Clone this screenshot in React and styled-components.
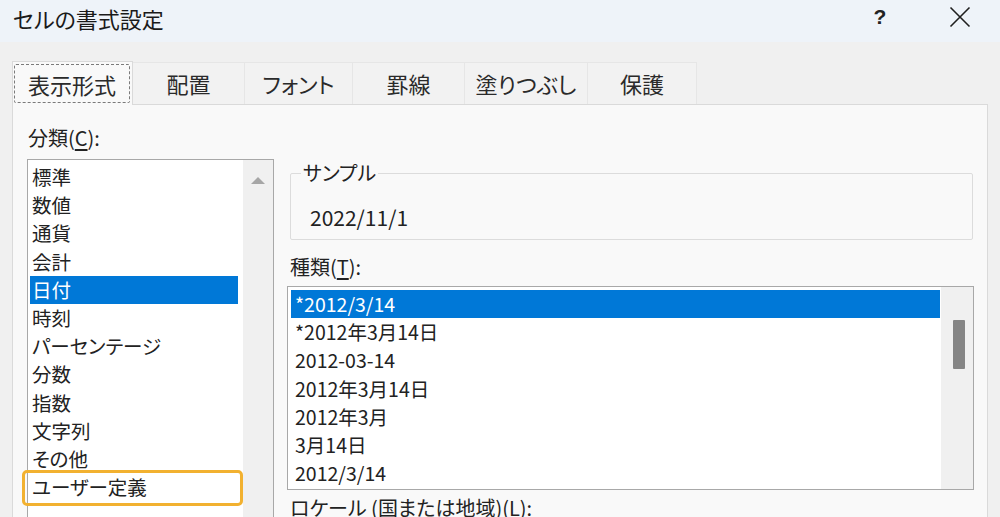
import React from 'react';
import styled, { createGlobalStyle } from 'styled-components';

const FONT = '"Noto Sans CJK JP", "Noto Sans", sans-serif';

const categories = [
  '標準',
  '数値',
  '通貨',
  '会計',
  '日付',
  '時刻',
  'パーセンテージ',
  '分数',
  '指数',
  '文字列',
  'その他',
  'ユーザー定義',
];

const types = [
  '*2012/3/14',
  '*2012年3月14日',
  '2012-03-14',
  '2012年3月14日',
  '2012年3月',
  '3月14日',
  '2012/3/14',
];

const tabs = ['表示形式', '配置', 'フォント', '罫線', '塗りつぶし', '保護'];
const tabWidths = [121, 112, 108, 112, 123, 109];

const GlobalStyle = createGlobalStyle`
  html, body {
    margin: 0;
    padding: 0;
    background: #f0f0f0;
  }
  body {
    font-family: ${FONT};
    font-feature-settings: "palt";
  }
`;

const App = () => {
  return (
    <>
      <GlobalStyle />
      <Window>
        <TitleBar>
          <Title>セルの書式設定</Title>
          <TitleButtons>
            <HelpButton>?</HelpButton>
            <CloseButton>
              <svg width="22" height="22" viewBox="0 0 22 22">
                <path d="M1.5 1.5 L20.5 20.5 M20.5 1.5 L1.5 20.5" stroke="#1f1f1f" strokeWidth="1.6" fill="none" />
              </svg>
            </CloseButton>
          </TitleButtons>
        </TitleBar>

        <Body>
          <TabRow>
            {tabs.map((t, i) => (
              <Tab key={t} active={i === 0} style={{ width: tabWidths[i] }}>
                {i === 0 ? <FocusRect>{t}</FocusRect> : t}
              </Tab>
            ))}
          </TabRow>

          <Panel>
            <LeftColumn>
              <FieldLabel>
                分類(<u>C</u>):
              </FieldLabel>
              <CategoryList>
                <Rows>
                  {categories.map((c, i) => (
                    <CategoryRow key={c} selected={i === 4}>
                      {c}
                      {i === 11 && <Highlight />}
                    </CategoryRow>
                  ))}
                </Rows>
                <ScrollTrack width={30}>
                  <UpArrow />
                </ScrollTrack>
              </CategoryList>
            </LeftColumn>

            <RightColumn>
              <GroupBox>
                <Legend>サンプル</Legend>
                <SampleValue>2022/11/1</SampleValue>
              </GroupBox>

              <FieldLabel indent spaced>
                種類(<u>T</u>):
              </FieldLabel>
              <TypeList>
                <Rows>
                  {types.map((t, i) => (
                    <TypeRow key={t + i} selected={i === 0}>
                      {t}
                    </TypeRow>
                  ))}
                </Rows>
                <ScrollTrack width={32}>
                  <Thumb />
                </ScrollTrack>
              </TypeList>

              <FieldLabel indent>
                ロケール (国または地域)(<u>L</u>):
              </FieldLabel>
            </RightColumn>
          </Panel>
        </Body>
      </Window>
    </>
  );
};

export default App;

const Window = styled.div`
  width: 1000px;
  height: 517px;
  overflow: hidden;
  display: flex;
  flex-direction: column;
  background: #f0f0f0;
  color: #1e1e1e;
`;

const TitleBar = styled.div`
  height: 42px;
  flex-shrink: 0;
  display: flex;
  align-items: center;
  justify-content: space-between;
  padding-left: 13px;
  background: #eef3f9;
`;

const Title = styled.div`
  font-size: 22px;
  line-height: 28px;
  margin-top: -6px;
  color: #1a1a1a;
`;

const TitleButtons = styled.div`
  display: flex;
  align-items: center;
  margin-top: -8px;
`;

const HelpButton = styled.div`
  width: 40px;
  text-align: center;
  font-family: "Liberation Sans", sans-serif;
  font-size: 21px;
  font-weight: bold;
  color: #222;
  margin-right: 40px;
`;

const CloseButton = styled.div`
  width: 40px;
  display: flex;
  justify-content: center;
  margin-right: 20px;
`;

const Body = styled.div`
  flex: 1;
  display: flex;
  flex-direction: column;
  padding: 18px 12px 0;
  min-height: 0;
`;

const TabRow = styled.div`
  display: flex;
  align-items: flex-end;
  height: 44px;
  flex-shrink: 0;
`;

const Tab = styled.div`
  box-sizing: border-box;
  height: ${({ active }) => (active ? 44 : 42)}px;
  display: flex;
  align-items: center;
  justify-content: center;
  font-size: 22px;
  color: #2a2a2a;
  background: ${({ active }) => (active ? '#f9f9f9' : '#f2f2f2')};
  border: 1px solid ${({ active }) => (active ? '#dadada' : '#e6e6e6')};
  border-bottom: none;
  border-left: ${({ active }) => (active ? '1px solid #dadada' : 'none')};
  padding: ${({ active }) => (active ? '2px 2px 2px 1px' : '0 0 2px')};
  position: relative;
  z-index: ${({ active }) => (active ? 1 : 0)};
  margin-bottom: ${({ active }) => (active ? '-1px' : '0')};
`;

const FocusRect = styled.div`
  flex: 1;
  align-self: stretch;
  display: flex;
  align-items: center;
  justify-content: center;
  border: 1px dashed #7a7a7a;
  border-radius: 2px;
`;

const Panel = styled.div`
  flex: 1;
  min-height: 0;
  display: grid;
  grid-template-columns: 247px 687px;
  column-gap: 13px;
  padding: 21px 13px 0 14px;
  background: #f9f9f9;
  border: 1px solid #dadada;
  border-bottom: none;
`;

const LeftColumn = styled.div`
  display: flex;
  flex-direction: column;
`;

const RightColumn = styled.div`
  display: flex;
  flex-direction: column;
`;

const FieldLabel = styled.div`
  font-size: 20px;
  line-height: 24px;
  height: 24px;
  padding-left: ${({ indent }) => (indent ? 3 : 1)}px;
  margin-top: ${({ spaced }) => (spaced ? 15 : 0)}px;
  margin-bottom: ${({ indent }) => (indent ? 7 : 9)}px;
  color: #222;
  white-space: nowrap;

  u {
    text-underline-offset: 3px;
  }
`;

const ListFrame = styled.div`
  box-sizing: border-box;
  display: flex;
  background: #fff;
  border: 1px solid #a8a8a8;
  flex-shrink: 0;
`;

const CategoryList = styled(ListFrame)`
  height: 400px;
`;

const TypeList = styled(ListFrame)`
  height: 204px;
  margin-bottom: 6px;
`;

const Rows = styled.div`
  flex: 1;
  padding-top: 3px;
`;

const Row = styled.div`
  height: 28.2px;
  line-height: 28.2px;
  font-size: 19.5px;
  color: ${({ selected }) => (selected ? '#fff' : '#222')};
  background: ${({ selected }) => (selected ? '#0078d7' : 'transparent')};
  white-space: nowrap;
`;

const CategoryRow = styled(Row)`
  position: relative;
  margin: 0 5px 0 2px;
  padding-left: 2px;
`;

const TypeRow = styled(Row)`
  margin: 0 1px 0 3px;
  padding-left: 4px;
`;

const Highlight = styled.div`
  position: absolute;
  left: -8px;
  right: -5px;
  top: -3px;
  bottom: -5px;
  border: 3px solid #f2b130;
  border-radius: 5px;
  pointer-events: none;
`;

const ScrollTrack = styled.div`
  width: ${({ width }) => width}px;
  flex-shrink: 0;
  background: #f0f0f0;
  display: flex;
  flex-direction: column;
  align-items: center;
`;

const UpArrow = styled.div`
  margin-top: 17px;
  width: 0;
  height: 0;
  border-left: 7px solid transparent;
  border-right: 7px solid transparent;
  border-bottom: 7px solid #a6a6a6;
`;

const Thumb = styled.div`
  margin-top: 33px;
  margin-left: 4px;
  width: 12px;
  height: 49px;
  background: #858585;
  border-radius: 1px;
`;

const GroupBox = styled.fieldset`
  margin: 35px 1px 0 3px;
  padding: 20px 20px 10px 19px;
  border: 1px solid #dcdcdc;
  border-radius: 2px;
  min-inline-size: 0;
`;

const Legend = styled.legend`
  font-size: 20px;
  line-height: 24px;
  padding: 0 2px;
  margin-left: -9px;
  color: #222;
`;

const SampleValue = styled.div`
  font-size: 21px;
  line-height: 24px;
  color: #222;
`;
